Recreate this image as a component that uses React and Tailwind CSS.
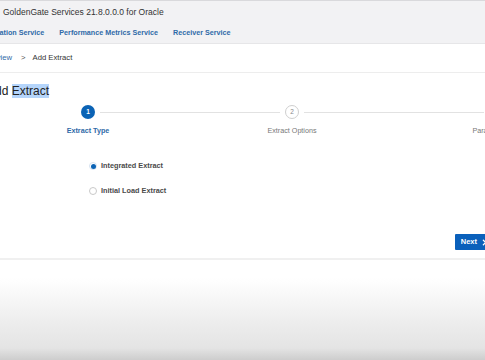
import { ChevronRight } from 'lucide-react';

const steps = [
  { n: 1, label: 'Extract Type', active: true },
  { n: 2, label: 'Extract Options', active: false },
  { n: 3, label: 'Parameter File', active: false },
];

const options = [
  { label: 'Integrated Extract', checked: true },
  { label: 'Initial Load Extract', checked: false },
];

export default function App() {
  return (
    <div className="w-[485px] h-[360px] overflow-hidden bg-white flex flex-col font-['Liberation_Sans',Arial,sans-serif]">
      {/* Header */}
      <header className="bg-[#f2f2f4] border-t border-[#d9d9dc] border-b border-b-[#e6e6e8] shrink-0">
        <div className="h-[22px] flex items-center pl-[3px] text-[8.5px] text-[#333] whitespace-nowrap">
          GoldenGate Services 21.8.0.0.0 for Oracle
        </div>
        <nav className="h-[20px] flex items-center gap-[15px] text-[7.2px] font-bold text-[#2f6aa8] whitespace-nowrap">
          <span className="-ml-[34px]">Administration Service</span>
          <span>Performance Metrics Service</span>
          <span>Receiver Service</span>
        </nav>
      </header>

      {/* Breadcrumb */}
      <div className="h-[29px] shrink-0 flex items-center border-b border-[#ededed] text-[7.7px] whitespace-nowrap">
        <span className="-ml-[20px] text-[#2f6aa8]">Overview</span>
        <span className="ml-[9px] text-[#555]">&gt;</span>
        <span className="ml-[7px] text-[#333]">Add Extract</span>
      </div>

      {/* Title */}
      <h1 className="mt-[5px] h-[26px] shrink-0 flex items-center text-[12px] text-[#222] whitespace-nowrap">
        <span className="-ml-[13px]">
          Add <span className="bg-[#b5d5fb]">Extract</span>
        </span>
      </h1>

      {/* Stepper */}
      <div className="flex -ml-[14px] shrink-0">
        {steps.map((s, i) => (
          <div key={s.n} className="w-[204px] shrink-0 flex flex-col items-center">
            <div className="w-full h-[16px] flex items-center gap-[5px]">
              <div className={`flex-1 h-px ${i === 0 ? 'bg-transparent' : 'bg-[#e2e2e2]'}`} />
              {s.active ? (
                <div className="w-[14px] h-[14px] rounded-full bg-[#0b63b5] text-white text-[6.5px] font-bold flex items-center justify-center">
                  {s.n}
                </div>
              ) : (
                <div className="w-[14px] h-[14px] rounded-full border border-[#cfcfcf] bg-white text-[#888] text-[6.5px] flex items-center justify-center">
                  {s.n}
                </div>
              )}
              <div className="flex-1 h-px bg-[#e2e2e2]" />
            </div>
            <div
              className={`mt-[6px] h-[10px] flex items-center text-[7.2px] whitespace-nowrap ${
                s.active ? 'font-bold text-[#2f6aa8]' : 'text-[#777]'
              }`}
            >
              {s.label}
            </div>
          </div>
        ))}
      </div>

      {/* Radio options */}
      <div className="mt-[23px] ml-[89px] flex flex-col gap-[11px] shrink-0">
        {options.map((o) => (
          <label key={o.label} className="h-[14px] flex items-center gap-[4px] text-[7.3px] font-bold text-[#4a4a4a] whitespace-nowrap">
            {o.checked ? (
              <span className="w-[8px] h-[8px] rounded-full border border-[#d6e2f0] bg-white flex items-center justify-center">
                <span className="w-[5px] h-[5px] rounded-full bg-[#0b63b5]" />
              </span>
            ) : (
              <span className="w-[8px] h-[8px] rounded-full border border-[#c9c9c9] bg-white" />
            )}
            {o.label}
          </label>
        ))}
      </div>

      {/* Next button */}
      <div className="mt-[36px] flex justify-end shrink-0">
        <button className="-mr-[12px] h-[16px] pl-[6px] pr-[8px] bg-[#0a60bb] text-white text-[7.5px] font-bold flex items-center gap-[3px] rounded-[1px]">
          Next
          <ChevronRight size={9} strokeWidth={3.5} />
        </button>
      </div>

      {/* Footer fade */}
      <div className="mt-[8px] border-t-2 border-[#f0f0f0] flex-1 bg-[linear-gradient(to_bottom,#ffffff_0%,#ffffff_18%,#f6f6f6_40%,#ececec_65%,#e4e4e4_88%,#cdcdcd_100%)]" />
    </div>
  );
}
